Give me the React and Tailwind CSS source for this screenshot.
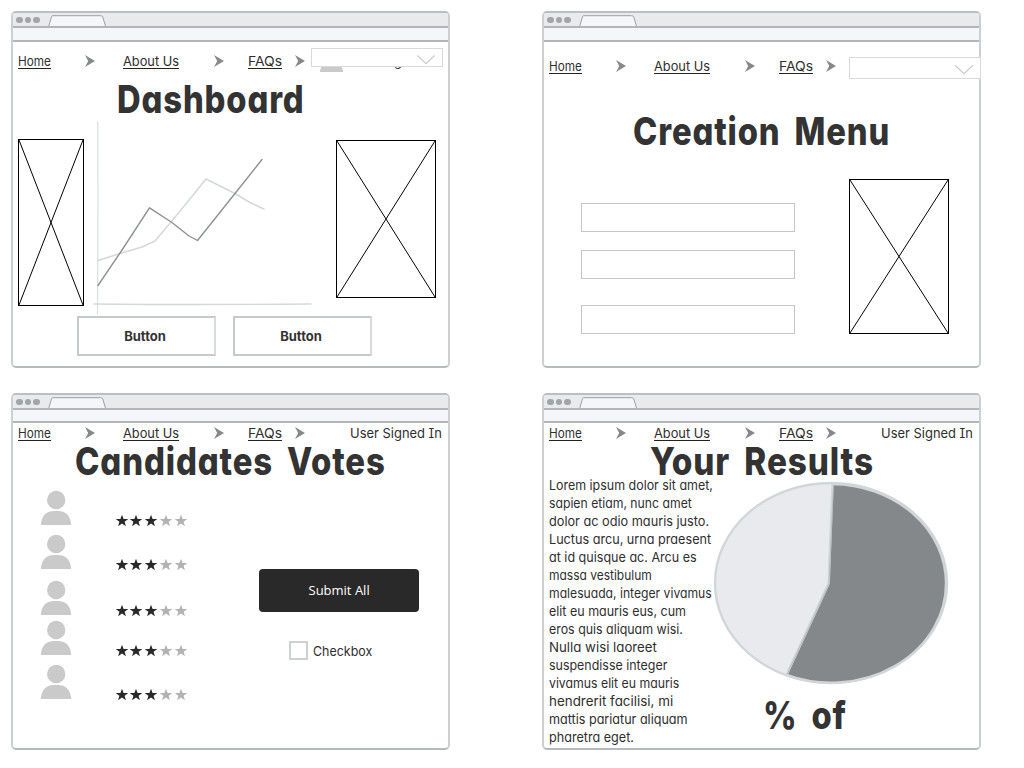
import React, { useLayoutEffect, useRef, useState } from 'react';

// Stretches a single line of text so that it fills the width of its box.
function FitText({ className = '', textClass = '', children }) {
  const box = useRef(null);
  const text = useRef(null);
  const [scale, setScale] = useState(1);
  useLayoutEffect(() => {
    setScale(box.current.clientWidth / text.current.offsetWidth);
  }, [children]);
  return (
    <span ref={box} className={`block shrink-0 whitespace-nowrap ${className}`}>
      <span ref={text} className={`inline-block origin-left ${textClass}`} style={{ transform: `scaleX(${scale})` }}>
        {children}
      </span>
    </span>
  );
}

function Arrow({ className }) {
  return (
    <svg className={`mt-0.5 h-3 w-2.5 shrink-0 ${className}`} viewBox="0 0 10 12" fill="#85898c">
      <path d="M0 0 L10 6 L0 12 L3.2 6 Z" />
    </svg>
  );
}

function Nav({ className, user = true }) {
  const link = 'h-4 border-b border-[#222] leading-4';
  return (
    <nav className={`flex h-4 shrink-0 items-start pl-[5px] text-[13.5px] ${className}`}>
      <FitText className={`w-[33px] ${link}`}>Home</FitText>
      <Arrow className="ml-[34px]" />
      <FitText className={`ml-7 w-14 ${link}`}>About Us</FitText>
      <Arrow className="ml-[35px]" />
      <FitText className={`ml-6 w-[34px] ${link}`}>FAQs</FitText>
      <Arrow className="ml-[13px]" />
      {user && <FitText className="ml-[45px] h-4 w-[92px] leading-4">User Signed In</FitText>}
    </nav>
  );
}

function Heading({ className, children }) {
  return (
    <h1 className={`h-10 shrink-0 pt-px text-[38.5px] leading-10 font-extrabold text-[#333] ${className}`}>
      <FitText className="w-full" textClass="tracking-[1px] [word-spacing:7px]">{children}</FitText>
    </h1>
  );
}

function BrowserWindow({ barClass = 'h-[13px]', children }) {
  return (
    <section className="relative flex h-[357px] w-[439px] flex-col rounded-[5px] border-2 border-[#cdd0d2] border-t-[#bbbfc1] border-b-[#b5babc] bg-white">
      <div className="flex h-[15px] shrink-0 items-end rounded-t-[3px] border-b-2 border-[#b2b6b9] bg-[#e9eaec]">
        <div className="flex gap-0.5 self-center pt-px pl-[3px]">
          <i className="size-[6.5px] rounded-full bg-[#a2a5a8]" />
          <i className="size-[6.5px] rounded-full bg-[#a2a5a8]" />
          <i className="size-[6.5px] rounded-full bg-[#a2a5a8]" />
        </div>
        <svg className="ml-[7px] h-[11px] w-[60px]" viewBox="0 0 60 11" fill="#f5f6f9" stroke="#9ca1a4">
          <path d="M1.8 11 L4.6 1.5 Q4.9 .7 5.8 .7 L53.5 .7 Q55.2 .7 55.7 1.8 L58.5 11" />
        </svg>
      </div>
      <div className={`shrink-0 border-b-2 border-[#b2b6b9] bg-[#f5f6f9] ${barClass}`} />
      {children}
    </section>
  );
}

function CrossBox({ className }) {
  return (
    <div className={`shrink-0 border border-black ${className}`}>
      <svg className="block h-full w-full" viewBox="0 0 100 100" preserveAspectRatio="none" stroke="#000">
        <path d="M0 0 L100 100 M100 0 L0 100" vectorEffect="non-scaling-stroke" />
      </svg>
    </div>
  );
}

function Dropdown({ className }) {
  return (
    <div className={`absolute z-10 flex w-[132px] items-center justify-end border border-[#d9d9d9] bg-white pr-[7px] ${className}`}>
      <svg className="mt-1 h-2.5 w-[18px]" viewBox="0 0 18 10" fill="none" stroke="#c6c9cb" strokeWidth="1.2">
        <path d="M.3 .5 L9 8.7 L17.7 .5" />
      </svg>
    </div>
  );
}

function Avatar({ className }) {
  return (
    <svg className={`shrink-0 ${className}`} viewBox="0 0 30 34" preserveAspectRatio="none" fill="#cacaca">
      <circle cx="15.2" cy="9" r="9.2" />
      <path d="M0 34 V32 Q2 20 13 20 H17 Q28 20 30 32 V34 Z" />
    </svg>
  );
}

function Star({ className }) {
  return (
    <svg className={`h-[11px] w-3 ${className}`} viewBox="0 0 12 11" fill="currentColor">
      <path d="M6 -.2 L7.6 4 H12.2 L8.6 6.7 L9.9 11.2 L6 8.6 L2.1 11.2 L3.4 6.7 L-.2 4 H4.4 Z" />
    </svg>
  );
}

function Candidate({ className = '' }) {
  return (
    <li className={`flex h-[34px] items-end ${className}`}>
      <Avatar className="h-[34px] w-[30px]" />
      <div className="-mb-px ml-[45px] flex text-[#292929]">
        <Star />
        <Star className="ml-0.5" />
        <Star className="ml-[3px]" />
        <Star className="ml-[3px] text-[#b2b2b2]" />
        <Star className="ml-[3px] text-[#b2b2b2]" />
      </div>
    </li>
  );
}

function SketchButton({ children }) {
  return (
    <button className="flex h-10 w-[139px] items-center border-2 border-[#c6c9ca] border-r-[#d8dadb] bg-white pt-0.5 pl-[45px] text-[13px] font-bold text-[#333]">
      <FitText className="w-[42px]">{children}</FitText>
    </button>
  );
}

function LineChart() {
  return (
    <svg className="h-[198px] w-[252px] shrink-0" viewBox="84 118 252 198" fill="none" strokeLinecap="round" strokeLinejoin="round">
      <path d="M97.7 122 L98 200 L97.5 314" stroke="#dce0e1" strokeWidth="1.3" />
      <path d="M94 304 Q200 305 311 304" stroke="#d3d9da" strokeWidth="1.3" />
      <path d="M98 260.5 L120 253.5 L142 247 L155 241 L181 210 L206 179 L235 193.5 L250 202.5 L264 209" stroke="#d4d8da" strokeWidth="1.5" />
      <path d="M98 285.5 L122 250 L149.5 207.8 L172 222.5 L189 236 L197.5 240.5 L229 201 L262 159.5" stroke="#8d9194" strokeWidth="1.4" />
    </svg>
  );
}

function PieChart() {
  return (
    <svg className="h-[206px] w-[238px]" viewBox="712 480 238 206" strokeLinejoin="round">
      <ellipse cx="831" cy="583" rx="116" ry="100" fill="#e9eaee" stroke="#d1d6d8" strokeWidth="2.4" />
      <path d="M828.7 583.5 L832.5 484 A115 99.3 0 0 1 946 583 A115 99.3 0 0 1 786.5 675 Z" fill="#84888b" stroke="#d1d6d8" strokeWidth="2.4" />
      <path d="M787.2 674 L829 583.5 L833.5 485" fill="none" stroke="#b4b9bb" strokeWidth=".8" />
    </svg>
  );
}

const lines = [
  ['Lorem ipsum dolor sit amet,', 'w-[164px]'],
  ['sapien etiam, nunc amet', 'w-[143px]'],
  ['dolor ac odio mauris justo.', 'w-[160px]'],
  ['Luctus arcu, urna praesent', 'w-[162px]'],
  ['at id quisque ac. Arcu es', 'w-[148px]'],
  ['massa vestibulum', 'w-[103px]'],
  ['malesuada, integer vivamus', 'w-[163px]'],
  ['elit eu mauris eus, cum', 'w-[137px]'],
  ['eros quis aliquam wisi.', 'w-[134px]'],
  ['Nulla wisi laoreet', 'w-[108px]'],
  ['suspendisse integer', 'w-[118px]'],
  ['vivamus elit eu mauris', 'w-[130px]'],
  ['hendrerit facilisi, mi', 'w-[124px]'],
  ['mattis pariatur aliquam', 'w-[139px]'],
  ['pharetra eget.', 'w-[85px]'],
];

export default function App() {
  return (
    <main className="grid h-[768px] w-[1024px] grid-cols-[439px_439px] content-start gap-x-[92px] gap-y-[25px] overflow-hidden bg-white pt-[11px] pl-[11px] font-['Inter','Open_Sans',sans-serif] text-[#2e2e2e] [font-feature-settings:'cv11','cv08']">
      <BrowserWindow barClass="h-[14px]">
        <Nav className="mt-[11px]" />
        <Avatar className="absolute top-[36px] left-[307px] h-[23px] w-[23px]" />
        <Dropdown className="top-[35px] left-[298px] h-[19px]" />
        <Heading className="mt-[9px] ml-[104px] w-[188px]">Dashboard</Heading>
        <div className="flex h-[198px] shrink-0 items-start pl-[5px]">
          <CrossBox className="mt-[21px] h-[167px] w-[66px]" />
          <LineChart />
          <CrossBox className="mt-[22px] h-[158px] w-[100px]" />
        </div>
        <div className="flex gap-[17px] pl-16">
          <SketchButton>Button</SketchButton>
          <SketchButton>Button</SketchButton>
        </div>
      </BrowserWindow>

      <BrowserWindow barClass="h-[14px]">
        <Nav className="mt-4" user={false} />
        <Dropdown className="top-11 left-[305px] h-[22px]" />
        <Heading className="mt-9 ml-[89px] w-[257px]">Creation Menu</Heading>
        <div className="flex items-start pt-[29px] pl-[37px]">
          <div className="flex flex-col pt-6">
            <div className="h-[29px] w-[214px] border border-[#c6c6c6]" />
            <div className="mt-[18px] h-[29px] w-[214px] border border-[#c6c6c6]" />
            <div className="mt-[26px] h-[29px] w-[214px] border border-[#c6c6c6]" />
          </div>
          <CrossBox className="ml-[54px] h-[155px] w-[100px]" />
        </div>
      </BrowserWindow>

      <BrowserWindow>
        <Nav className="mt-0.5" />
        <Heading className="-mt-px ml-[62px] w-[311px]">Candidates Votes</Heading>
        <div className="flex">
          <ul className="flex w-[246px] shrink-0 flex-col pt-[11px] pl-7">
            <Candidate />
            <Candidate className="mt-2.5" />
            <Candidate className="mt-3" />
            <Candidate className="mt-1.5" />
            <Candidate className="mt-2.5" />
          </ul>
          <div className="pt-[89px]">
            <button className="flex h-[43px] w-40 items-center justify-center rounded-[4px] bg-[#292929] font-['Open_Sans',sans-serif] text-[13px] text-white">
              <FitText className="w-[61px]">Submit All</FitText>
            </button>
            <label className="flex items-center pt-[29px] pl-[30px] text-[13.5px]">
              <span className="size-[19px] border-2 border-[#cdd1d3]" />
              <FitText className="ml-[5px] w-[59px] leading-4">Checkbox</FitText>
            </label>
          </div>
        </div>
      </BrowserWindow>

      <BrowserWindow>
        <Nav className="mt-0.5" />
        <Heading className="-mt-px ml-[106px] w-[224px]">Your Results</Heading>
        <div className="flex items-start">
          <p className="-mt-1 w-[168px] shrink-0 pl-[4.5px] text-[13.5px] leading-[18px]">
            {lines.map(([text, width]) => (
              <FitText key={text} className={`h-[18px] ${width}`}>{text}</FitText>
            ))}
          </p>
          <div className="flex flex-col">
            <PieChart />
            <Heading className="mt-2 ml-[51px] w-[84px]">% of</Heading>
          </div>
        </div>
      </BrowserWindow>
    </main>
  );
}
